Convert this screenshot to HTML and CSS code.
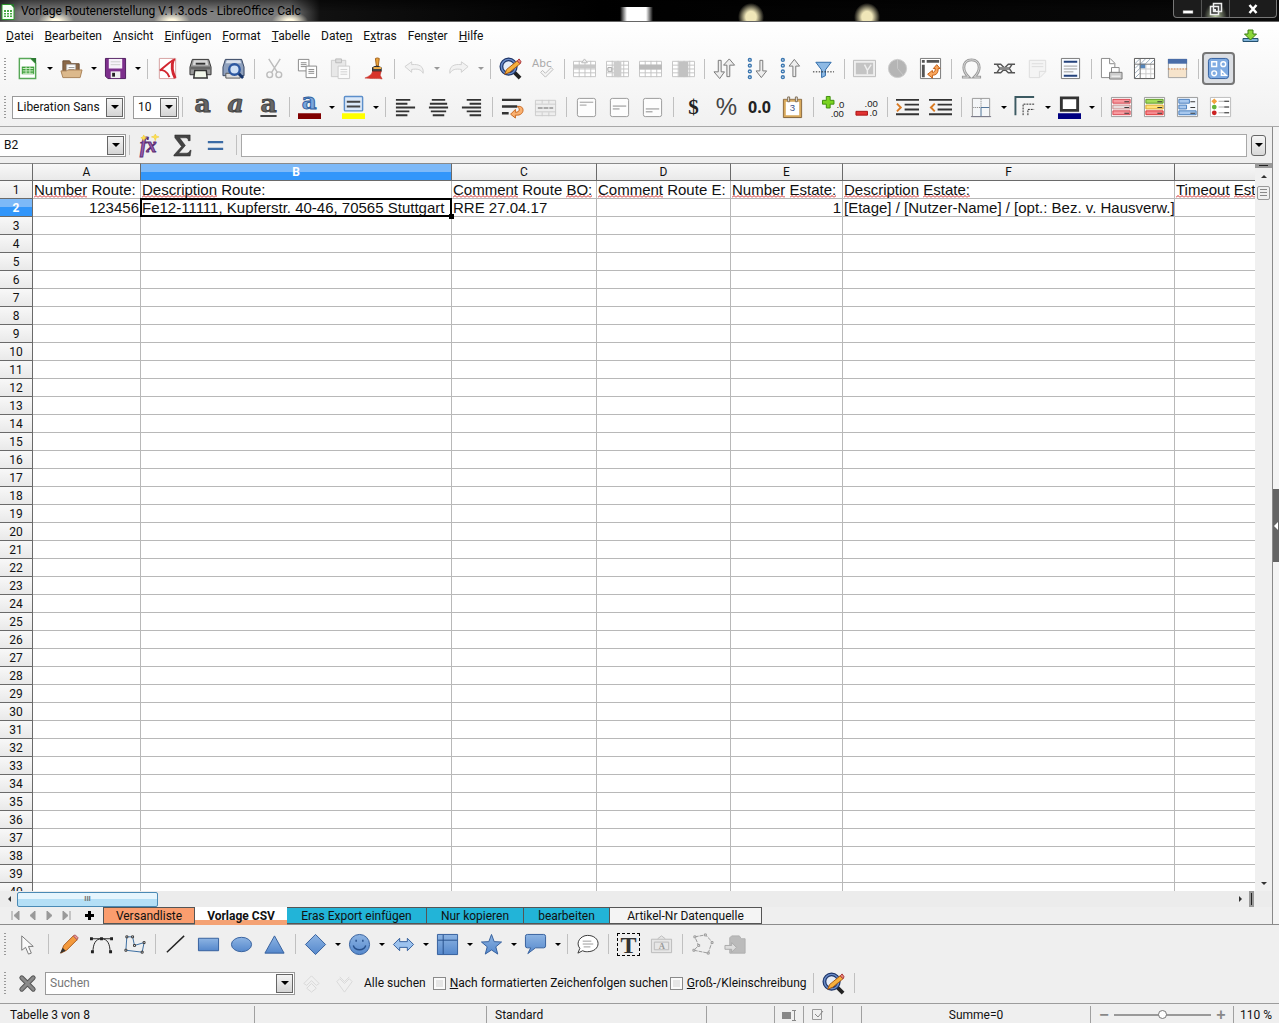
FILE: index.html
```html
<!DOCTYPE html>
<html lang="de">
<head>
<meta charset="utf-8">
<title>Vorlage Routenerstellung V.1.3.ods - LibreOffice Calc</title>
<link rel="stylesheet" href="styles.css">
</head>
<body>
<svg class="defs" aria-hidden="true">
<defs>
<linearGradient id="blue" x1="0" y1="0" x2="0" y2="1"><stop offset="0" stop-color="#8db4e3"/><stop offset="1" stop-color="#5588cc"/></linearGradient>
<symbol id="find" viewBox="0 0 24 24"><path d="M15 15l7 7" stroke="#222" stroke-width="4"/><circle cx="10" cy="10" r="7.500" fill="#e4ecf8" stroke="#1d3568" stroke-width="4"/><circle cx="10" cy="10" r="7.500" fill="none" stroke="#6b8cc8" stroke-width="1.500"/><path d="M6 18l2-5 11-9 3 3-11 9z" fill="#f6b03c" stroke="#a95a12"/><path d="M19 4l2-2 2 3-1 2z" fill="#e88a80" stroke="#a33"/></symbol>
<symbol id="sheetgrid" viewBox="0 0 24 24"><path d="M.5 4.500h23v16H.5zM.5 8.500h23M.5 12.500h23M.5 16.500h23M6.500 4v17M12.500 4v17M18.500 4v17" fill="#fff" stroke="#c4c4c4"/></symbol>
</defs>
</svg>

<header class="titlebar">
  <svg class="appicon" viewBox="0 0 16 16"><path d="M2 .5h9l3 3v12H2z" fill="#f6fff4" stroke="#2e9a2e"/><path d="M11 0l3 4V0z" fill="#25762b"/><path d="M4 6h8v7H4z" fill="#49a944"/><path d="M4 8.500h8M4 11h8M6.500 6v7M9.500 6v7" stroke="#fff"/></svg>
  <h1>Vorlage Routenerstellung V.1.3.ods - LibreOffice Calc</h1>
  <div class="winbtns">
    <button aria-label="Minimieren"><svg viewBox="0 0 16 16"><path d="M3 9.500h10v3H3z" fill="#fff" stroke="#777" stroke-width=".5"/></svg></button>
    <button aria-label="Verkleinern" class="glow"><svg viewBox="0 0 16 16"><path d="M5.500 2.500h8v8h-8zM2.500 5.500h8v8h-8z" fill="#333" stroke="#eee" stroke-width="1.500"/><path d="M5 8h3v3H5z" fill="#eee"/></svg></button>
    <button aria-label="Schließen" class="close"><svg viewBox="0 0 16 16"><path d="M4.500 4l7 8M11.500 4l-7 8" stroke="#fff" stroke-width="2.500"/></svg></button>
  </div>
</header>

<div class="top">
<nav class="menubar">
  <button><u>D</u>atei</button><button><u>B</u>earbeiten</button><button><u>A</u>nsicht</button><button><u>E</u>infügen</button><button><u>F</u>ormat</button><button><u>T</u>abelle</button><button>Date<u>n</u></button><button>E<u>x</u>tras</button><button>Fen<u>s</u>ter</button><button><u>H</u>ilfe</button>
  <button class="update" aria-label="Aktualisierung"><svg viewBox="0 0 16 14"><path d="M.5 9.500h15v3H.5z" fill="#7fb2d8" stroke="#23506e"/><path d="M5.500 1h5v4H14l-6 6-6-6h3.500z" fill="#8bd63a" stroke="#3b7d12"/></svg></button>
</nav>

<div class="toolbar" role="toolbar" aria-label="Standard">
  <i class="grip"></i>
  <button class="tb" aria-label="Neu"><svg viewBox="0 0 24 24"><path d="M3.500 1.500h12l5 5v16h-17z" fill="#fff" stroke="#58a858" stroke-width="1.500"/><path d="M15 1h6v6z" fill="#2d7a33"/><path d="M6 10h13v8H6z" fill="#3f9f3c"/><path d="M7 12h11M7 14.500h11M7 17h11M10.500 10v8M14.500 10v8" stroke="#cfeec8"/></svg></button><button class="dd" aria-label="Neu, Auswahl"></button>
  <button class="tb" aria-label="Öffnen"><svg viewBox="0 0 24 24"><path d="M3 18V4h7l2 3h8v11z" fill="#8a6848" stroke="#6d5038"/><path d="M7 8h9v9H7z" fill="#fff" stroke="#bbb"/><path d="M9 11h6M9 13h6" stroke="#999"/><path d="M1 14.500h6l1-1h15l-2 8H3z" fill="#dcb98c" stroke="#a98257"/></svg></button><button class="dd" aria-label="Öffnen, Auswahl"></button>
  <button class="tb" aria-label="Speichern"><svg viewBox="0 0 24 24"><path d="M1.500 1.500h21v21H4l-2.500-2.500z" fill="#7d2f8c" stroke="#4d1b5d"/><path d="M5 2h14v10H5z" fill="#f7f1fa"/><path d="M7 5h10M7 8h10" stroke="#ccc"/><path d="M7 15h10v7H7z" fill="#eee"/><path d="M8.500 16.500h3v4h-3z" fill="#222"/></svg></button><button class="dd" aria-label="Speichern, Auswahl"></button>
  <i class="sep"></i>
  <button class="tb" aria-label="Als PDF exportieren"><svg viewBox="0 0 24 24"><path d="M3.500 1.500h17v21h-17z" fill="#fff" stroke="#d5a0a0"/><path d="M20 2.500C15 4 11 9 4 14c3-1 8 1 10 7" fill="none" stroke="#d22630" stroke-width="2"/><path d="M18 3c-2 6-1 13 2 19" fill="none" stroke="#d22630" stroke-width="3"/></svg></button>
  <button class="tb" aria-label="Drucken"><svg viewBox="0 0 24 24"><path d="M3.500 2.500h17l2.500 8v8H1v-8z" fill="#999" stroke="#333"/><path d="M5 3.500h14l1 5H4z" fill="#d8d8d8"/><path d="M7 7h10" stroke="#333" stroke-width="2"/><path d="M2 10h20v3H2z" fill="#666"/><path d="M6 14h12l1 8H5z" fill="#f2f7ea" stroke="#333" stroke-width="1.500"/></svg></button>
  <button class="tb" aria-label="Druckvorschau"><svg viewBox="0 0 24 24"><path d="M3.500 2.500h17l2.500 8v9H1v-9z" fill="#8ea0bd" stroke="#33425e"/><path d="M5 3.500h14l1 3H4z" fill="#d8dfea"/><path d="M4 17h15v5H4z" fill="#ddd" stroke="#555"/><path d="M17 17l5 5" stroke="#16346b" stroke-width="3"/><circle cx="13" cy="13" r="5.500" fill="#cfe0f5" stroke="#2c57a0" stroke-width="2.500"/></svg></button>
  <i class="sep"></i>
  <button class="tb" aria-label="Ausschneiden"><svg viewBox="0 0 24 24" fill="none" stroke="#bdbdbd" stroke-width="1.500"><path d="M6 2l9 14M18 2L9 16"/><circle cx="7" cy="18.500" r="3"/><circle cx="16.500" cy="18.500" r="3"/></svg></button>
  <button class="tb" aria-label="Kopieren"><svg viewBox="0 0 24 24"><path d="M2.500 2.500h11v12h-11z" fill="#fff" stroke="#888"/><path d="M5 6h6M5 8h6M5 10h6" stroke="#888"/><path d="M10.500 9.500h11v12h-11z" fill="#fff" stroke="#888"/><path d="M13 13h6M13 15h6M13 17h6" stroke="#888"/></svg></button>
  <button class="tb" aria-label="Einfügen"><svg viewBox="0 0 24 24"><path d="M2.500 3.500h15v17h-15z" fill="#e8e8e8" stroke="#ccc"/><path d="M7 2h6v4H7z" fill="#ddd" stroke="#bbb"/><path d="M9.500 9.500h12v13h-12z" fill="#fafafa" stroke="#ccc"/><path d="M12 13h7M12 15.500h7M12 18h7" stroke="#d0d0d0"/></svg></button>
  <button class="tb" aria-label="Format übertragen"><svg viewBox="0 0 24 24"><path d="M14 1.500q2-1 4 0l-1 8h-2z" fill="#e9a23a" stroke="#a4611a"/><path d="M11 11q4-3 9 0v4h-9z" fill="#444" stroke="#222"/><path d="M12 11.500h8" stroke="#f2b04a" stroke-width="2"/><path d="M11 15h9l-1 4 2 4c-4-1-8 0-18-1 4-2 7-3 8-7z" fill="#d8342b" stroke="#b9251d" stroke-width=".5"/></svg></button>
  <i class="sep"></i>
  <button class="tb" aria-label="Rückgängig"><svg viewBox="0 0 24 24"><path d="M2 10l7-5v3c8-1 13 2 12 9-2-4-6-5-12-4v3z" fill="#f2f2f2" stroke="#d0d0d0"/></svg></button><button class="dd dim" aria-label="Rückgängig, Auswahl"></button>
  <button class="tb" aria-label="Wiederherstellen"><svg viewBox="0 0 24 24"><path d="M22 10l-7-5v3C7 7 2 10 3 17c2-4 6-5 12-4v3z" fill="#f2f2f2" stroke="#d0d0d0"/></svg></button><button class="dd dim" aria-label="Wiederherstellen, Auswahl"></button>
  <i class="sep"></i>
  <button class="tb" aria-label="Suchen und Ersetzen"><svg><use href="#find"/></svg></button>
  <button class="tb" aria-label="Rechtschreibung"><svg viewBox="0 0 24 24"><text x="0" y="10" font-size="11" fill="#aaa" font-family="DejaVu Sans">Abc</text><path d="M9 16l2-2 3 3 6-6 2 2-8 8z" fill="#f4f4f4" stroke="#bbb"/></svg></button>
  <i class="sep"></i>
  <button class="tb" aria-label="Zeile"><svg viewBox="0 0 24 24"><use href="#sheetgrid" width="24" height="24"/><path d="M1 8h22v4H1z" fill="#c8c8c8"/><path d="M12 2l3 4H9z" fill="#eee" stroke="#bbb"/></svg></button>
  <button class="tb" aria-label="Spalte"><svg viewBox="0 0 24 24"><use href="#sheetgrid" width="24" height="24"/><path d="M8 5h8v16H8z" fill="#ccc"/><path d="M2 11h4v4H2z" fill="#eee" stroke="#aaa"/></svg></button>
  <button class="tb" aria-label="Zeilen löschen"><svg viewBox="0 0 24 24"><use href="#sheetgrid" width="24" height="24"/><path d="M0 8h24v5H0z" fill="#bbb"/></svg></button>
  <button class="tb" aria-label="Spalten löschen"><svg viewBox="0 0 24 24"><use href="#sheetgrid" width="24" height="24"/><path d="M7 5h10v16H7z" fill="#c2c2c2"/></svg></button>
  <i class="sep"></i>
  <button class="tb" aria-label="Sortieren"><svg viewBox="0 0 24 24" fill="#eee" stroke="#777"><path d="M5.500 3.500h3v12H12l-5 7-6-7h4.500zM14.500 20.500h3V8.500h5L17 2l-6 6.500h3.500z"/></svg></button>
  <button class="tb" aria-label="Aufsteigend sortieren"><svg viewBox="0 0 24 24"><g fill="#fff" stroke="#3c77b0" stroke-width="1.500"><circle cx="4" cy="3" r="1.500"/><circle cx="4" cy="9" r="1.500"/><circle cx="4" cy="15" r="1.500"/><circle cx="4" cy="21" r="1.500"/></g><path d="M14.500 3.500h3v11h4l-5.500 7-5.500-7h4z" fill="#eee" stroke="#777"/></svg></button>
  <button class="tb" aria-label="Absteigend sortieren"><svg viewBox="0 0 24 24"><g fill="#fff" stroke="#3c77b0" stroke-width="1.500"><circle cx="4" cy="3" r="1.500"/><circle cx="4" cy="9" r="1.500"/><circle cx="4" cy="15" r="1.500"/><circle cx="4" cy="21" r="1.500"/></g><path d="M14.500 20.500h3v-11h4L16 2.500l-5.500 7h4z" fill="#eee" stroke="#777"/></svg></button>
  <button class="tb" aria-label="AutoFilter"><svg viewBox="0 0 24 24"><path d="M4 5.500h16l-6 8v6l-4 2v-8z" fill="#8db9e4" stroke="#2f6ba8"/><path d="M1 15.500h22" stroke="#222" stroke-dasharray="1.500 1.500"/></svg></button>
  <i class="sep"></i>
  <button class="tb" aria-label="Bild"><svg viewBox="0 0 24 24"><path d="M.5 3.500h23v17H.5z" fill="#eee" stroke="#bbb"/><path d="M3 6h18v12H3z" fill="#c4c4c4"/><path d="M12 8l3 6 4-6M15 14v4" stroke="#eee" stroke-width="1.500" fill="none"/></svg></button>
  <button class="tb" aria-label="Diagramm"><svg viewBox="0 0 24 24"><circle cx="12" cy="12" r="9.500" fill="#b5b5b5" stroke="#ccc"/><path d="M12 12V3M12 12l6 7" stroke="#c8c8c8"/></svg></button>
  <button class="tb" aria-label="Pivot-Tabelle"><svg viewBox="0 0 24 24"><path d="M1.500 1.500h21v21h-21z" fill="#fff" stroke="#777"/><path d="M3 3h3v3H3zM8 3h13v3H8zM3 8h3v13H3z" fill="#555"/><path d="M15 12l3.500-4 3.500 4h-2c0 5-2 7-6 7v3l-5-4 5-4v2c2 0 3-1 3-4z" fill="#f9a65c" stroke="#c25a0e"/></svg></button>
  <i class="sep"></i>
  <button class="tb" aria-label="Sonderzeichen"><svg viewBox="0 0 24 24"><path d="M2 21h7C6 18 4 14 4 11c0-5 3-8 8-8s8 3 8 8c0 3-2 7-5 10h7" fill="none" stroke="#999" stroke-width="3"/><path d="M3 21h6C6 18 4 14 4 11c0-5 3-8 8-8s8 3 8 8c0 3-2 7-5 10h6" fill="none" stroke="#ddd"/></svg></button>
  <button class="tb" aria-label="Hyperlink"><svg viewBox="0 0 24 24" fill="none" stroke="#555" stroke-width="1.500"><path d="M1 7.500h7l4 4 4-4h7M1 16.500h7l4-4 4 4h7M4 7.500l3 4.500-3 4.500M20 7.500L17 12l3 4.500"/><path d="M7 12h10" stroke-width="3" stroke="#888"/></svg></button>
  <button class="tb" aria-label="Kommentar"><svg viewBox="0 0 24 24"><path d="M3.500 3.500h17v12l-6 6h-11z" fill="#f4f4f4" stroke="#ddd"/><path d="M20 15h-6v6M6 7h12M6 10h12" fill="none" stroke="#ddd"/></svg></button>
  <button class="tb" aria-label="Kopf- und Fußzeilen"><svg viewBox="0 0 24 24"><path d="M2.500 1.500h19v21h-19z" fill="#f8fbff" stroke="#777"/><path d="M5 5h14M5 19.500h14" stroke="#23427c" stroke-width="2"/><path d="M5 9.500h14M5 12.500h14M5 15.500h10" stroke="#999"/></svg></button>
  <i class="sep"></i>
  <button class="tb" aria-label="Druckbereich"><svg viewBox="0 0 24 24"><path d="M1.500 1.500h9l5 5v15h-14z" fill="#fff" stroke="#888"/><path d="M10 2v5h5" fill="none" stroke="#888"/><path d="M12 11h8v6h-8z" fill="#fff" stroke="#888"/><path d="M10 16h13v7H10z" fill="#ccc" stroke="#777"/><path d="M12 20h9" stroke="#fff"/></svg></button>
  <button class="tb" aria-label="Fixieren"><svg viewBox="0 0 24 24"><path d="M1.500 1.500h21v21h-21z" fill="#fff" stroke="#555"/><path d="M2 7l5-5M2 12l5-5M2 17l5-5M2 22l5-5M8 7l5-5M13 7l5-5M18 7l4-4" stroke="#9ab"/><path d="M7 7h6v5H7z" fill="#5586bb"/><path d="M7 12.500h15M7 17.500h15M13.500 7v15M18.500 7v15" stroke="#ccc"/><path d="M7.500 2v20M2 7.500h20" stroke="#777"/></svg></button>
  <button class="tb" aria-label="Fenster teilen"><svg viewBox="0 0 24 24"><path d="M2.500 2.500h19v19h-19z" fill="#f8f8f8" stroke="#999"/><path d="M2 2h20v5H2z" fill="#4a6da8"/><path d="M3 13h18v8H3z" fill="#f6e4cc"/><path d="M2 12.500h20" stroke="#cc7733" stroke-dasharray="2 1"/></svg></button>
  <i class="sep"></i>
  <button class="tb pressed" aria-label="Zeichnungsfunktionen" aria-pressed="true"><svg viewBox="0 0 24 24"><rect x="1.500" y="1.500" width="21" height="21" rx="3" fill="#7fabe2" stroke="#315f9f"/><g fill="none" stroke="#fff" stroke-width="1.500"><path d="M5 5h5v5H5zM15 19v-5l5 5z"/><circle cx="17" cy="7.500" r="2.500"/><circle cx="7.500" cy="17" r="2.500"/></g></svg></button>
</div>

<div class="toolbar format" role="toolbar" aria-label="Formatierung">
  <i class="grip"></i>
  <div class="combo fontname"><input aria-label="Schriftart" value="Liberation Sans"><button aria-label="Schriftart wählen"></button></div>
  <div class="combo fontsize"><input aria-label="Schriftgröße" value="10"><button aria-label="Größe wählen"></button></div>
  <i class="sep narrow"></i>
  <button class="tb letter" aria-label="Fett">a</button>
  <button class="tb letter italic" aria-label="Kursiv">a</button>
  <button class="tb letter under" aria-label="Unterstrichen">a</button>
  <i class="sep"></i>
  <button class="tb" aria-label="Schriftfarbe"><svg viewBox="0 0 24 24"><text x="4" y="14" font-size="24" font-weight="bold" fill="#7ba6dc" stroke="#2f5f9f" font-family="DejaVu Serif">a</text><path d="M0 18h24v6H0z" fill="#800000"/></svg></button><button class="dd" aria-label="Schriftfarbe, Auswahl"></button>
  <button class="tb" aria-label="Hintergrundfarbe"><svg viewBox="0 0 24 24"><rect x="2.500" y=".5" width="19" height="15" rx="1" fill="#dce9f8" stroke="#5c8fcb" stroke-width="1.500"/><path d="M5 6h14M5 11h14" stroke="#444" stroke-width="2"/><path d="M0 18h24v6H0z" fill="#ff0"/></svg></button><button class="dd" aria-label="Hintergrundfarbe, Auswahl"></button>
  <i class="sep"></i>
  <button class="tb" aria-label="Linksbündig"><svg viewBox="0 0 24 24" stroke="#333" stroke-width="2"><path d="M2 4h15M2 8h12M2 12h20M2 16h14M2 20h12"/></svg></button>
  <button class="tb" aria-label="Zentriert"><svg viewBox="0 0 24 24" stroke="#333" stroke-width="2"><path d="M5 4h14M3 8h18M2 12h20M4 16h16M6 20h12"/></svg></button>
  <button class="tb" aria-label="Rechtsbündig"><svg viewBox="0 0 24 24" stroke="#333" stroke-width="2"><path d="M7 4h15M10 8h12M2 12h20M7 16h15M10 20h12"/></svg></button>
  <i class="sep"></i>
  <button class="tb" aria-label="Zeilenumbruch"><svg viewBox="0 0 24 24"><path d="M1 4h20M1 11h16M1 18h7" stroke="#333" stroke-width="2.500"/><path d="M17 11c8-2 8 9 0 9h-2v3l-5-4 5-5v3c5 0 5-4 2-6z" fill="#f9b070" stroke="#c8641a"/></svg></button>
  <button class="tb" aria-label="Zellen verbinden"><svg viewBox="0 0 24 24"><path d="M1.500 4.500h21v16h-21zM1 8.500h22M1 16.500h22M8.500 4v4M15.500 4v4M8.500 17v4M15.500 17v4" fill="#eee" stroke="#ccc"/><path d="M4 12.500h16" stroke="#aaa" stroke-width="2" stroke-dasharray="5 1"/></svg></button>
  <i class="sep"></i>
  <button class="tb" aria-label="Oben ausrichten"><svg viewBox="0 0 24 24"><rect x="2.500" y="2.500" width="19" height="19" rx="2" fill="#fdfdfd" stroke="#999"/><path d="M5 6.500h14M5 9.500h7" stroke="#999"/></svg></button>
  <button class="tb" aria-label="Mittig ausrichten"><svg viewBox="0 0 24 24"><rect x="2.500" y="2.500" width="19" height="19" rx="2" fill="#fdfdfd" stroke="#999"/><path d="M5 10.500h14M5 13.500h7" stroke="#888"/></svg></button>
  <button class="tb" aria-label="Unten ausrichten"><svg viewBox="0 0 24 24"><rect x="2.500" y="2.500" width="19" height="19" rx="2" fill="#fdfdfd" stroke="#999"/><path d="M5 13.500h14M5 16.500h7" stroke="#888"/></svg></button>
  <i class="sep"></i>
  <button class="tb sign dollar" aria-label="Währung">$</button>
  <button class="tb sign percent" aria-label="Prozent">%</button>
  <button class="tb sign number" aria-label="Zahl">0.0</button>
  <button class="tb" aria-label="Datum"><svg viewBox="0 0 24 24"><path d="M2.500 3.500h19v19h-19z" fill="#fff" stroke="#7c5a2c" stroke-width="1"/><path d="M4 5h16v16H4z" fill="#fff" stroke="#d8a95c" stroke-width="2"/><path d="M7 1h2v5H7zM15 1h2v5h-2z" fill="#eee" stroke="#7c6a50"/><text x="9" y="16" font-size="10" fill="#3a4f86" font-family="Liberation Sans">3</text></svg></button>
  <i class="sep"></i>
  <button class="tb" aria-label="Dezimalstelle hinzufügen"><svg viewBox="0 0 24 24"><path d="M4.500.5h4v4h4v4h-4v4h-4v-4h-4v-4h4z" fill="#7bd321" stroke="#3d8c0c"/><text x="15" y="12" font-size="10" fill="#222" font-family="Liberation Sans">.0</text><text x="9" y="22" font-size="10" fill="#222" font-family="Liberation Sans">.00</text></svg></button>
  <button class="tb" aria-label="Dezimalstelle löschen"><svg viewBox="0 0 24 24"><text x="10" y="11" font-size="10" fill="#222" font-family="Liberation Sans">.00</text><path d="M1 16h12v4H1z" fill="#e03232" stroke="#a11"/><text x="15" y="21" font-size="10" fill="#222" font-family="Liberation Sans">.0</text></svg></button>
  <i class="sep"></i>
  <button class="tb" aria-label="Einzug erhöhen"><svg viewBox="0 0 24 24"><path d="M0 4h24M9 9h15M9 14h15M0 19h24" stroke="#333" stroke-width="2"/><path d="M1 8l4 4-4 4" fill="none" stroke="#d97a22" stroke-width="2"/></svg></button>
  <button class="tb" aria-label="Einzug vermindern"><svg viewBox="0 0 24 24"><path d="M0 4h24M9 9h15M9 14h15M0 19h24" stroke="#333" stroke-width="2"/><path d="M6 8l-4 4 4 4" fill="none" stroke="#d97a22" stroke-width="2"/></svg></button>
  <i class="sep"></i>
  <button class="tb" aria-label="Umrandung"><svg viewBox="0 0 24 24"><path d="M2.500 2.500h18v19h-18z" fill="#f4f6f8" stroke="#999"/><path d="M11.500 3v9H3" fill="none" stroke="#777" stroke-dasharray="1 1"/><path d="M11.500 21v-9H20" fill="none" stroke="#4a6f94"/><path d="M1 21.500h21" stroke="#778"/></svg></button><button class="dd" aria-label="Umrandung, Auswahl"></button>
  <button class="tb" aria-label="Umrandungsstil"><svg viewBox="0 0 24 24"><path d="M1.500 20V1H21" fill="none" stroke="#3c5a62" stroke-width="2"/><path d="M9.500 20V8.500H21M14.500 20v-6H21" fill="none" stroke="#222" stroke-dasharray="2 1"/></svg></button><button class="dd" aria-label="Umrandungsstil, Auswahl"></button>
  <button class="tb" aria-label="Rahmenfarbe"><svg viewBox="0 0 24 24"><path d="M3.500 2h17v13h-17z" fill="#fff" stroke="#333" stroke-width="3"/><path d="M0 18h24v6H0z" fill="#000080"/></svg></button><button class="dd" aria-label="Rahmenfarbe, Auswahl"></button>
  <i class="sep"></i>
  <button class="tb" aria-label="Bedingung"><svg viewBox="0 0 24 24"><path d="M1.500 1.500h21v20h-21z" fill="#fff" stroke="#999"/><path d="M3 3.500h18v4H3zM3 15.500h18v4H3z" fill="#f79a9f" stroke="#d84650"/><path d="M3 9.500h18v4H3z" fill="#e8dcdc" stroke="#c88"/><path d="M15 6h5M15 18h5M15 12h5" stroke="#333"/></svg></button>
  <button class="tb" aria-label="Farbskala"><svg viewBox="0 0 24 24"><path d="M1.500 1.500h21v20h-21z" fill="#fff" stroke="#999"/><path d="M3 3.500h18v4H3z" fill="#a4dc5c" stroke="#5b9b25"/><path d="M3 9.500h18v4H3z" fill="#ffe27a" stroke="#d9a32a"/><path d="M3 15.500h18v4H3z" fill="#f58a8f" stroke="#d33"/><path d="M15 6h5M15 12h5M15 18h5" stroke="#333"/></svg></button>
  <button class="tb" aria-label="Datenbalken"><svg viewBox="0 0 24 24"><path d="M1.500 1.500h21v20h-21z" fill="#f4f8fd" stroke="#999"/><path d="M3 3.500h11v4H3zM3 9.500h8v4H3zM3 15.500h18v4H3z" fill="#a8c8ee" stroke="#4a7ebd"/><path d="M15 6h5M15 12h5M15 18h5" stroke="#333"/></svg></button>
  <button class="tb" aria-label="Symbolsatz"><svg viewBox="0 0 24 24"><path d="M1.500 1.500h21v20h-21z" fill="#fff" stroke="#bbb"/><path d="M10 5.500h11M10 11.500h11M10 17.500h11" stroke="#aaa"/><path d="M16 5.500h5M16 11.500h5M16 17.500h5" stroke="#333"/><path d="M5.500 2.500l3 3-3 3-3-3z" fill="#f2a13c"/><circle cx="5.500" cy="11.500" r="2.500" fill="#63b53b"/><circle cx="5.500" cy="17.500" r="2.500" fill="#c22"/></svg></button>
</div>
</div>

<main class="workarea">
<div class="sheetside">
<div class="formulabar">
  <div class="combo namebox"><input aria-label="Namenfeld" value="B2"><button aria-label="Bereich wählen"></button></div>
  <i class="sep narrow"></i>
  <button class="tb" aria-label="Funktions-Assistent"><svg viewBox="0 0 24 24"><text x="2" y="19" font-size="21" font-style="italic" font-weight="bold" fill="#9a5fb0" stroke="#5b2d73" font-family="Liberation Serif">fx</text><path d="M6 1l1 2 2 1-2 1-1 2-1-2-2-1 2-1zM18 0l1 2 3 1-3 1-1 3-1-3-3-1 3-1z" fill="#ffe14d" stroke="#e8c12a" stroke-width=".5"/></svg></button>
  <button class="tb" aria-label="Summe"><svg viewBox="0 0 24 24"><path d="M4 1h16v6h-2c0-2-1-3-3-3H9l6 8-7 8h8c2 0 3-1 4-3h1l-1 6H3v-1l8-9-7-9z" fill="#444" stroke="#222" stroke-width=".5"/></svg></button>
  <button class="tb" aria-label="Funktion"><svg viewBox="0 0 24 24"><path d="M4 8.500h16M4 15.500h16" stroke="#3b6ba5" stroke-width="2.500"/></svg></button>
  <i class="sep"></i>
  <input class="formula" aria-label="Eingabezeile">
  <button class="expand" aria-label="Eingabezeile erweitern"></button>
</div>

<div class="gridrow">
  <div class="grid">
  <table>
    <colgroup><col class="ch"><col class="ca"><col class="cb"><col class="cc"><col class="cd"><col class="ce"><col class="cf"><col></colgroup>
    <thead><tr><td></td><th>A</th><th class="sel">B</th><th>C</th><th>D</th><th>E</th><th>F</th><th></th></tr></thead>
    <tbody id="cells">
      <tr><th>1</th><td><s>Number</s> Route:</td><td><s>Description</s> Route:</td><td><s>Comment</s> Route <s>BO:</s></td><td><s>Comment</s> Route E:</td><td><s>Number</s> <s>Estate:</s></td><td><s>Description</s> <s>Estate:</s></td><td><s>Timeout</s> <s>Estate:</s></td></tr>
      <tr><th class="sel">2</th><td class="num">123456</td><td class="cursor">Fe12-11111, Kupferstr. 40-46, 70565 Stuttgart</td><td>RRE 27.04.17</td><td></td><td class="num">1</td><td>[Etage] / [Nutzer-Name] / [opt.: Bez. v. Hausverw.]</td><td></td></tr>
    </tbody>
  </table>
  </div>
  <div class="vscroll">
    <i class="split"></i>
    <button class="up" aria-label="Nach oben"></button>
    <i class="thumb"></i>
    <span class="space"></span>
    <button class="down" aria-label="Nach unten"></button>
  </div>
</div>

<div class="hscroll">
  <button class="left" aria-label="Nach links"></button>
  <i class="thumb">III</i>
  <span class="space"></span>
  <button class="right" aria-label="Nach rechts"></button>
  <i class="split"></i>
</div>

<div class="tabs">
  <button class="nav" aria-label="Erste Tabelle"><svg viewBox="0 0 9 9"><path d="M1 0v9M8 0L3 4.500 8 9z"/></svg></button>
  <button class="nav" aria-label="Vorige Tabelle"><svg viewBox="0 0 9 9"><path d="M7 0L2 4.500 7 9z"/></svg></button>
  <button class="nav" aria-label="Nächste Tabelle"><svg viewBox="0 0 9 9"><path d="M2 0l5 4.500L2 9z"/></svg></button>
  <button class="nav" aria-label="Letzte Tabelle"><svg viewBox="0 0 9 9"><path d="M8 0v9M1 0l5 4.500L1 9z"/></svg></button>
  <button class="nav add" aria-label="Tabelle hinzufügen"><svg viewBox="0 0 9 9"><path d="M3 0h3v3h3v3H6v3H3V6H0V3h3z"/></svg></button>
  <button class="tab orange t1">Versandliste</button><button class="tab active t1">Vorlage CSV</button><button class="tab cyan t2">Eras Export einfügen</button><button class="tab cyan t3">Nur kopieren</button><button class="tab cyan t4">bearbeiten</button><button class="tab t5">Artikel-Nr Datenquelle</button>
</div>
</div>
<button class="sidebar" aria-label="Seitenleiste einblenden"><span></span></button>
</main>

<footer>
<div class="toolbar draw" role="toolbar" aria-label="Zeichnung">
  <i class="grip"></i>
  <button class="tb" aria-label="Auswahl"><svg viewBox="0 0 24 24"><path d="M6 3v15l4-3 3 7 3-1-3-7h5z" fill="#fafafa" stroke="#777"/></svg></button>
  <i class="sep"></i>
  <button class="tb" aria-label="Freihandlinie"><svg viewBox="0 0 24 24"><path d="M4 21l3-8L17 3l4 4-11 11z" fill="#f49a3d" stroke="#a85a1c"/><path d="M17 3l2-1 3 3-1 2z" fill="#e99" stroke="#a55"/><path d="M3 21.500l3-6 3 3z" fill="#333"/></svg></button>
  <button class="tb" aria-label="Kurve"><svg viewBox="0 0 24 24"><path d="M2 6h20M3 21C3 11 6 6 12 6s9 5 9 15" fill="none" stroke="#222"/><path d="M0 4.500h3v3H0zM10.500 4.500h3v3h-3zM21 4.500h3v3h-3zM1 18h3v3H1zM20 18h3v3h-3z" fill="#222"/></svg></button>
  <button class="tb" aria-label="Polygon"><svg viewBox="0 0 24 24"><path d="M4 4h6l2 9 10-3-2 10L3 18z" fill="none" stroke="#356a9f"/><g fill="#fff" stroke="#333"><path d="M3 3h2v2H3zM9 3h2v2H9zM11 12h2v2h-2zM21 9h2v2h-2zM19 19h2v2h-2zM2 17h2v2H2z"/></g></svg></button>
  <i class="sep"></i>
  <button class="tb" aria-label="Linie"><svg viewBox="0 0 24 24"><path d="M3 20L21 3" stroke="#222" stroke-width="1.500"/></svg></button>
  <button class="tb" aria-label="Rechteck"><svg viewBox="0 0 24 24"><path d="M1.500 5.500h21v13h-21z" fill="url(#blue)" stroke="#335e9c"/></svg></button>
  <button class="tb" aria-label="Ellipse"><svg viewBox="0 0 24 24"><ellipse cx="12" cy="12" rx="10.500" ry="7.500" fill="url(#blue)" stroke="#335e9c"/></svg></button>
  <button class="tb" aria-label="Dreieck"><svg viewBox="0 0 24 24"><path d="M12 3l10 18H2z" fill="url(#blue)" stroke="#335e9c"/></svg></button>
  <i class="sep"></i>
  <button class="tb" aria-label="Standardformen"><svg viewBox="0 0 24 24"><path d="M12 1.500L22.500 12 12 22.500 1.500 12z" fill="url(#blue)" stroke="#335e9c"/></svg></button><button class="dd" aria-label="Standardformen, Auswahl"></button>
  <button class="tb" aria-label="Symbolformen"><svg viewBox="0 0 24 24"><circle cx="12" cy="12" r="10.500" fill="url(#blue)" stroke="#335e9c"/><path d="M8.500 7v2M15.500 7v2M5.500 13c2 6 11 6 13 0" fill="none" stroke="#274f8a" stroke-width="1.500"/></svg></button><button class="dd" aria-label="Symbolformen, Auswahl"></button>
  <button class="tb" aria-label="Blockpfeile"><svg viewBox="0 0 24 24"><path d="M1.500 12L8 5.500V9h8V5.500l6.500 6.500-6.500 6.500V15H8v3.500z" fill="#9cc2ee" stroke="#335e9c"/></svg></button><button class="dd" aria-label="Blockpfeile, Auswahl"></button>
  <button class="tb" aria-label="Flussdiagramm"><svg viewBox="0 0 24 24"><path d="M1.500 1.500h21v21h-21z" fill="url(#blue)" stroke="#335e9c"/><path d="M7.500 2v20M2 7.500h20" stroke="#274f8a"/></svg></button><button class="dd" aria-label="Flussdiagramm, Auswahl"></button>
  <button class="tb" aria-label="Sterne"><svg viewBox="0 0 24 24"><path d="M12 1.500l2.800 7.500 7.700.4-6 5 2 7.600-6.500-4.300L5.500 22l2-7.600-6-5 7.700-.4z" fill="url(#blue)" stroke="#335e9c"/></svg></button><button class="dd" aria-label="Sterne, Auswahl"></button>
  <button class="tb" aria-label="Legenden"><svg viewBox="0 0 24 24"><path d="M3.500 1.500h17q2 0 2 2v10q0 2-2 2H12l-8 6 3-6H3.500q-2 0-2-2v-10q0-2 2-2z" fill="url(#blue)" stroke="#335e9c"/></svg></button><button class="dd" aria-label="Legenden, Auswahl"></button>
  <i class="sep"></i>
  <button class="tb" aria-label="Legende"><svg viewBox="0 0 24 24"><path d="M12 2.500c7 0 11 4 11 8.500s-4 8.500-11 8.500c-2 0-3 0-5-1l-5 2.500 2-5c-5-6 1-13.500 8-13.500z" fill="#fff" stroke="#333"/><path d="M7 8.500h9M7 11.500h11M8 14.500h7" stroke="#999"/></svg></button>
  <i class="sep"></i>
  <button class="tb textbox" aria-label="Textfeld">T</button>
  <button class="tb" aria-label="Fontwork"><svg viewBox="0 0 24 24"><path d="M1.500 6.500h21v14h-21zM4.500 9.500h15v8h-15zM8 6l4-3 4 3" fill="#e6e6e6" stroke="#bbb"/><text x="9" y="17" font-size="9" font-weight="bold" fill="#999" font-family="Liberation Serif">A</text></svg></button>
  <i class="sep"></i>
  <button class="tb" aria-label="Punkte"><svg viewBox="0 0 24 24"><path d="M4 4l11-2 7 7-4 12-15-3 5-5z" fill="none" stroke="#999" stroke-dasharray="4 1"/><g fill="#eee" stroke="#999"><path d="M3 3h2v2H3zM14 1h2v2h-2zM21 9h2v2h-2zM17 20h2v2h-2zM2 17h2v2H2zM7 12h2v2H7z"/></g></svg></button>
  <button class="tb" aria-label="Aus Datei"><svg viewBox="0 0 24 24"><path d="M6 5l2-2h8l2 3h4v15H6z" fill="#bbb" stroke="#b0b0b0"/><path d="M1 13h7v-3l5 5-5 5v-3H1z" fill="#ddd" stroke="#aaa"/></svg></button>
</div>

<div class="toolbar search" role="toolbar" aria-label="Suchen">
  <i class="grip"></i>
  <button class="tb" aria-label="Suchleiste schließen"><svg viewBox="0 0 24 24"><path d="M6 6l12 12M18 6L6 18" stroke="#555" stroke-width="5" stroke-linecap="round"/><path d="M6 6l12 12M18 6L6 18" stroke="#8a8a8a" stroke-width="3" stroke-linecap="round"/></svg></button>
  <div class="combo query"><input aria-label="Suchen" placeholder="Suchen"><button aria-label="Suchverlauf"></button></div>
  <button class="tb" aria-label="Vorheriges"><svg viewBox="0 0 24 24"><path d="M4 12l8-8 8 8-3 2-5-5-5 5zM7 17l5-5 5 5-5 4z" fill="#f0f0f0" stroke="#d8d8d8"/></svg></button>
  <button class="tb" aria-label="Nächstes"><svg viewBox="0 0 24 24"><path d="M4 10l3-3 5 5 5-5 3 3-8 11zM7 5l5 5 5-5" fill="#f0f0f0" stroke="#d8d8d8"/></svg></button>
  <button class="all">Alle suchen</button>
  <label class="check"><input type="checkbox"><span><u>N</u>ach formatierten Zeichenfolgen suchen</span></label>
  <label class="check"><input type="checkbox"><span><u>G</u>roß-/Kleinschreibung</span></label>
  <i class="sep"></i>
  <button class="tb" aria-label="Suchen und Ersetzen"><svg><use href="#find"/></svg></button>
  <i class="sep"></i>
</div>

<div class="status">
  <span class="s1">Tabelle 3 von 8</span><span class="s2"></span><span class="s3">Standard</span><span class="s4"></span>
  <span class="s5"><svg viewBox="0 0 14 12"><path d="M0 3h9v7H0z" fill="#888"/><path d="M10 1.500h4M10 11.500h4M12.500 1v10" stroke="#888"/></svg></span>
  <span class="s5"><svg viewBox="0 0 14 12"><path d="M1.500.5h9v10h-9z" fill="none" stroke="#999"/><path d="M4 5l3 3 5-6" fill="none" stroke="#888"/></svg></span>
  <span class="s6"></span><span class="s7">Summe=0</span>
  <div class="zoom"><button aria-label="Verkleinern">−</button><input type="range" min="0" max="100" value="50" aria-label="Maßstab"><button aria-label="Vergrößern">+</button></div>
  <span class="s8">110 %</span>
</div>
</footer>
<script src="grid.js"></script>
</body>
</html>
```
FILE: styles.css
```css
* { box-sizing: border-box; }
body {
  margin: 0;
  height: 100vh;
  display: flex;
  flex-direction: column;
  overflow: hidden;
  background: #efefef;
  color: #111;
  font: 12px/16px Roboto, "Open Sans", sans-serif;
}
button, input { font: inherit; color: inherit; margin: 0; padding: 0; }
button { border: 0; background: none; white-space: nowrap; }
svg { display: block; }
.defs { position: absolute; width: 0; height: 0; }

/* title bar */
.titlebar {
  display: flex;
  align-items: center;
  height: 22px;
  flex: none;
  padding-right: 2px;
  border-bottom: 1px solid #666;
  background:
    radial-gradient(ellipse 18px 9px at 56px 21px, #fff8e0 20%, transparent),
    radial-gradient(ellipse 18px 9px at 172px 21px, #fff8e0 20%, transparent),
    radial-gradient(ellipse 18px 9px at 290px 21px, #fff8e0 20%, transparent),
    radial-gradient(ellipse 13px 14px at 751px 17px, #efe6b8 40%, transparent),
    radial-gradient(ellipse 13px 14px at 867px 17px, #efe6b8 40%, transparent),
    linear-gradient(90deg, transparent 620px, #fff 627px, #fff 646px, transparent 653px) 0 7px no-repeat,
    linear-gradient(#0008, transparent 12px),
    linear-gradient(90deg, #444 0, #7c7c7c 20px, #848484 150px, #7c7c7c 290px, #111 320px, #000 600px, #0a0a0a 100%);
}
.appicon { width: 16px; height: 16px; margin-top: 2px; }
h1 { margin: 0 auto 0 5px; font: inherit; color: #000; }
.winbtns { display: flex; align-self: flex-start; height: 18px; border: 1px solid #777; border-top: 0; border-radius: 0 0 4px 4px; background: #1c1c1c; }
.winbtns button { width: 28px; display: grid; place-items: center; border-right: 1px solid #555; }
.winbtns .close { width: 46px; border: 0; }
.winbtns .glow { background: radial-gradient(ellipse at 50% 100%, #b8c8a0, transparent 60%); }
.winbtns svg { width: 16px; height: 16px; }

/* menu and tool bars */
.top { flex: none; background: linear-gradient(#fff, #f1f1f1); border-bottom: 1px solid #a8a8a8; }
.menubar { display: flex; align-items: center; gap: 11px; height: 27px; padding: 0 20px 0 6px; }
.menubar .update { margin-left: auto; }
.update svg { width: 17px; height: 14px; }
.toolbar { display: flex; align-items: center; height: 39px; }
.format { height: 38px; }
.grip { flex: none; width: 2px; height: 22px; margin: 0 5px 0 4px; background: repeating-linear-gradient(#999 0 1px, transparent 1px 3px); }
.tb { flex: none; width: 33px; height: 33px; display: grid; place-items: center; }
.tb svg { width: 23px; height: 23px; overflow: visible; }
.dd { flex: none; width: 11px; height: 33px; display: grid; place-items: center; }
.dd::before, .combo button::before, .expand::before {
  content: ""; border: 3px solid transparent; border-top-color: #000; border-bottom: 0;
}
.dd.dim::before { border-top-color: #999; }
.sep { flex: none; width: 1px; height: 20px; margin: 0 3px 0 4px; background: #c0c0c0; }
.narrow { margin: 0 3px; }
.pressed { border: 2px solid #777; border-radius: 4px; background: #dcdfe4; }
.combo { display: flex; flex: none; height: 23px; border: 1px solid #9a9a9a; background: #fff; padding: 1px; }
.combo input { flex: 1; min-width: 0; border: 0; padding-left: 3px; background: none; outline: 0; }
.combo button { width: 17px; display: grid; place-items: center; border: 1px solid #666; background: linear-gradient(#f4f4f4, #d4d4d4); }
.combo button::before, .expand::before { border-width: 4px 4px 0; }
.fontname { width: 113px; margin: 0 8px 0 1px; }
.fontsize { width: 46px; }
.namebox { width: 126px; border-left: 0; }
.letter { font: bold 25px/26px "DejaVu Serif", serif; color: #666; -webkit-text-stroke: 1px #444; padding-bottom: 8px; }
.italic { font-style: italic; }
.under { text-decoration: underline; text-decoration-thickness: 2px; text-underline-offset: 3px; }
.sign { color: #222; }
.dollar { font: bold 21px/24px "Liberation Serif", serif; }
.percent { font: 24px/24px "Liberation Sans", sans-serif; color: #444; }
.number { font: bold 16px/24px "Open Sans", sans-serif; }

/* work area */
.workarea { display: flex; flex: 1; min-height: 0; }
.sheetside { flex: 1; min-width: 0; display: flex; flex-direction: column; }
.sidebar { width: 7px; border-left: 1px solid #8a8a8a; border-bottom: 1px solid #8a8a8a; background: #f4f4f4; display: flex; align-items: center; }
.sidebar span { width: 7px; height: 73px; background: #646464; display: grid; place-items: center; }
.sidebar span::before { content: ""; border: 4px solid transparent; border-right-color: #fff; border-left: 0; }
.formulabar { display: flex; align-items: center; height: 36px; flex: none; padding-right: 6px; }
.formula { flex: 1; min-width: 0; height: 23px; margin-left: 1px; border: 1px solid #a8a8a8; background: #fff; }
.expand { width: 15px; height: 21px; margin-left: 4px; display: grid; place-items: center; border: 1px solid #666; border-radius: 3px; background: linear-gradient(#f6f6f6, #d8d8d8); }

.gridrow { display: flex; flex: 1; min-height: 0; }
.grid { flex: 1; min-width: 0; overflow: hidden; background: #fff; }
table { width: 100%; table-layout: fixed; border-spacing: 0; }
.ch { width: 33px; } .ca { width: 108px; } .cb { width: 311px; } .cc { width: 145px; }
.cd { width: 134px; } .ce { width: 112px; } .cf { width: 332px; }
thead td, th { height: 18px; padding: 0; font-weight: normal; text-align: center; line-height: 16px; border: 0 solid #6a6a6a; border-width: 0 1px 1px 0; background: linear-gradient(#f8f8f8, #e9e9e9); }
thead td, thead th { border-top: 1px solid #8a8a8a; }
th.sel { color: #fff; font-weight: bold; background: linear-gradient(#7db9f8 50%, #3296fa 50%); }
tbody td { position: relative; height: 18px; padding: 0 1px; border: 0 solid #b8b8b8; border-width: 0 1px 1px 0; font: 15px/17px "Liberation Sans", Arial, sans-serif; white-space: nowrap; overflow: hidden; }
tr > :last-child { border-right: 0; }
tbody .num { text-align: right; }
tbody td.cursor { overflow: visible; }
.cursor::before { content: ""; position: absolute; inset: -1px; border: 2px solid #000; }
.cursor::after { content: ""; position: absolute; z-index: 1; right: -3px; bottom: -3px; width: 5px; height: 5px; background: #000; }
s {
  text-decoration: none;
  background: url("data:image/svg+xml,%3Csvg xmlns='http://www.w3.org/2000/svg' width='4' height='3'%3E%3Cpath d='M0 2.500L2 .5 4 2.500' fill='none' stroke='%23d02020'/%3E%3C/svg%3E") 0 100% repeat-x;
}

.vscroll { width: 17px; flex: none; display: flex; flex-direction: column; align-items: center; background: #f0f0f0; }
.vscroll .split { width: 100%; height: 5px; border: 2px solid #999; border-width: 2px 4px; background: #222; }
.vscroll button, .hscroll button { display: grid; place-items: center; width: 16px; height: 16px; }
.vscroll button::before, .hscroll button::before { content: ""; border: 3px solid transparent; }
.vscroll .up::before { border-bottom-color: #333; border-top: 0; }
.vscroll .down::before { border-top-color: #333; border-bottom: 0; }
.hscroll .left::before { border-right-color: #333; border-left: 0; }
.hscroll .right::before { border-left-color: #333; border-right: 0; }
.vscroll .thumb { width: 13px; height: 14px; margin-top: 2px; border: 1px solid #999; border-radius: 2px; padding: 2px; background: repeating-linear-gradient(#888 0 1px, transparent 1px 3px) content-box, #efefef; }
.space { flex: 1; }
.hscroll { display: flex; align-items: center; flex: none; height: 16px; padding: 0 18px 0 1px; background: #ececec; }
.hscroll .thumb { width: 141px; height: 15px; border: 1px solid #4a8ab5; border-radius: 2px; background: linear-gradient(#e6f5fd 45%, #b4dff6 50%); font: bold 8px/12px "Liberation Sans", sans-serif; text-align: center; color: #777; }
.hscroll .split { width: 5px; height: 16px; margin-left: 1px; border: 2px solid #999; background: #222; }

/* sheet tabs */
.tabs { display: flex; height: 18px; flex: none; border-bottom: 1px solid #8c8c8c; padding-left: 7px; }
.nav { width: 17px; display: grid; place-items: center; }
.nav svg { width: 9px; height: 9px; fill: #999; stroke: #999; }
.add { width: 28px; }
.add svg { fill: #000; stroke: none; }
.tab { height: 17px; border: 1px solid #555; border-left: 0; background: #f4f4f4; line-height: 14px; }
.orange { background: #fb9d6e; border-left: 1px solid #555; }
.cyan { background: #22b4d8; }
.active { height: 18px; border: 0; background: linear-gradient(#fff 13px, #f4a274 13px); font-weight: bold; }
.t1 { width: 92px; } .t2 { width: 140px; } .t3 { width: 97px; } .t4 { width: 86px; } .t5 { width: 152px; }

/* lower bars */
footer { flex: none; }
.draw { height: 38px; }
.search { height: 40px; }
.textbox { font: bold 24px/22px "Liberation Serif", serif; color: #333; outline: 1px dashed #000; width: 21px; height: 21px; margin: 0 6px; }
.query { width: 250px; margin: 0 0 0 1px; }
.query input::placeholder { color: #777; opacity: 1; }
.all { margin: 0 7px 0 3px; }
.check { display: flex; align-items: center; gap: 4px; margin-right: 2px; white-space: nowrap; }
.check input { appearance: none; width: 13px; height: 13px; border: 1px solid #8a8a8a; background: #e6e6e6; box-shadow: inset 0 0 0 2px #fafafa; }
.status { display: flex; height: 20px; border-top: 1px solid #9c9c9c; padding-top: 2px; line-height: 18px; }
.status > span, .zoom { border-right: 1px solid #a0a0a0; flex: none; }
.s1 { width: 255px; padding-left: 10px; }
.s2 { width: 232px; }
.s3 { width: 220px; padding-left: 8px; }
.s4 { width: 68px; }
.s5 { width: 29px; display: grid; place-items: center; }
.s5 svg { width: 14px; height: 12px; }
.s6 { width: 29px; }
.status .s7 { flex: 1; text-align: center; }
.zoom { display: flex; align-items: center; width: 143px; padding: 0 6px 0 7px; }
.zoom button { width: 12px; font: bold 16px/16px "Liberation Sans", sans-serif; color: #888; }
.zoom input { appearance: none; flex: 1; min-width: 0; height: 10px; margin: 0 4px; background: linear-gradient(#999, #999) 0 50% / 100% 2px no-repeat; }
.zoom input::-webkit-slider-thumb { appearance: none; width: 9px; height: 9px; border: 1px solid #777; border-radius: 50%; background: #fff; }
.status .s8 { width: 45px; border: 0; padding-left: 6px; }
```
FILE: grid.js
```js
// Fill the sheet with empty rows below the two data rows.
const body = document.getElementById("cells");
for (let n = 3; n <= 40; n++) {
  const row = body.insertRow();
  const head = document.createElement("th");
  head.textContent = n;
  row.append(head);
  for (let c = 0; c < 7; c++) row.insertCell();
}
```
